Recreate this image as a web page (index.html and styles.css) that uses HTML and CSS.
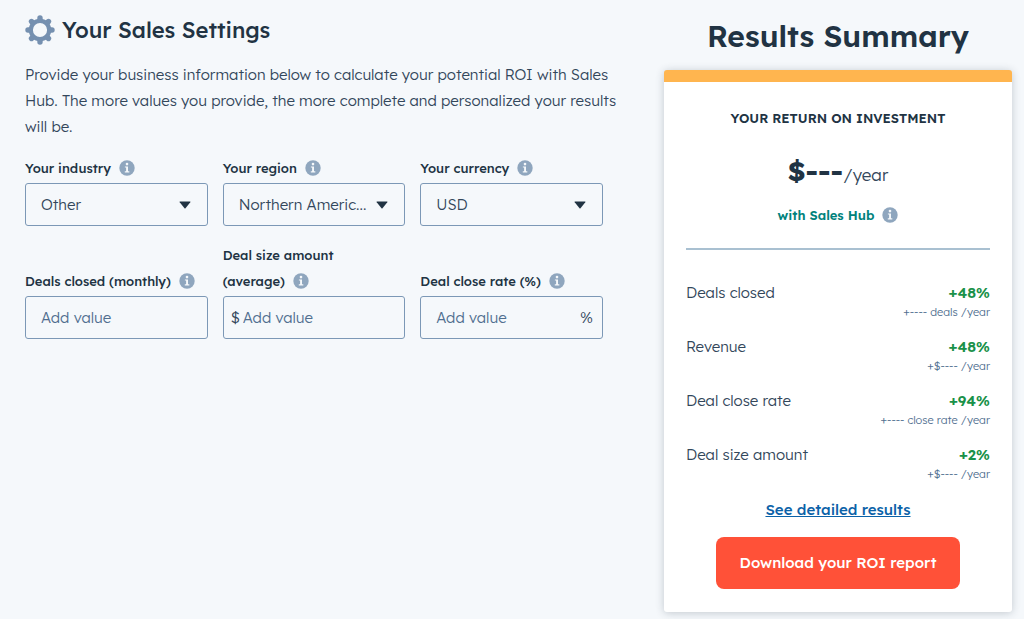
FILE: index.html
```html
<!DOCTYPE html>
<html lang="en">
<head>
<meta charset="utf-8">
<meta name="viewport" content="width=device-width, initial-scale=1">
<title>Sales Hub ROI Calculator</title>
<link rel="stylesheet" href="styles.css">
</head>
<body>
<svg class="sprite" aria-hidden="true">
  <symbol id="info" viewBox="0 0 16 16">
    <circle cx="8" cy="8" r="7.700" fill="#8fa6be"/>
    <circle cx="8" cy="4.1" r="1.3" fill="#f5f8fa"/>
    <path d="M5.9 6.400h3.100v4.900h1.300v1.100H5.800v-1.100h1.300V7.500H5.900z" fill="#f5f8fa"/>
  </symbol>
  <symbol id="caret" viewBox="0 0 12 8">
    <path d="M1 .5h10q.8 0 .3.7L6.5 7.3q-.5.6-1 0L.7 1.2Q.2.5 1 .5z" fill="#213343"/>
  </symbol>
</svg>
<main class="page">
  <section class="settings">
    <h1 class="settings-title">
      <svg class="gear" viewBox="0 0 30 30" aria-hidden="true">
        <g stroke="#7590b0" stroke-width="5.4" stroke-linecap="round">
          <path d="M15 3v2M15 25v2M3 15h2M25 15h2M6.500 6.500l1.300 1.300M22.200 22.200l1.300 1.300M23.500 6.500l-1.300 1.300M7.800 22.200l-1.300 1.300"/>
        </g>
        <circle cx="15" cy="15" r="9.200" fill="none" stroke="#7590b0" stroke-width="4.200"/>
      </svg>
      Your Sales Settings
    </h1>
    <p class="intro">Provide your business information below to calculate your potential ROI with Sales Hub. The more values you provide, the more complete and personalized your results will be.</p>
    <form class="fields">
      <div class="field">
        <div class="field-head"><label for="industry">Your industry</label><svg class="info"><use href="#info"/></svg></div>
        <div class="control"><select id="industry"><option>Other</option></select><svg class="caret"><use href="#caret"/></svg></div>
      </div>
      <div class="field">
        <div class="field-head"><label for="region">Your region</label><svg class="info"><use href="#info"/></svg></div>
        <div class="control"><select id="region"><option>Northern Americ...</option></select><svg class="caret"><use href="#caret"/></svg></div>
      </div>
      <div class="field">
        <div class="field-head"><label for="currency">Your currency</label><svg class="info"><use href="#info"/></svg></div>
        <div class="control"><select id="currency"><option>USD</option></select><svg class="caret"><use href="#caret"/></svg></div>
      </div>
      <div class="field">
        <div class="field-head"><label for="deals">Deals closed (monthly)</label><svg class="info"><use href="#info"/></svg></div>
        <div class="control"><input id="deals" type="text" placeholder="Add value"></div>
      </div>
      <div class="field">
        <div class="field-head"><label for="size">Deal size amount<br>(average)</label><svg class="info"><use href="#info"/></svg></div>
        <div class="control has-prefix"><span class="unit">$</span><input id="size" type="text" placeholder="Add value"></div>
      </div>
      <div class="field">
        <div class="field-head"><label for="rate">Deal close rate (%)</label><svg class="info"><use href="#info"/></svg></div>
        <div class="control has-suffix"><input id="rate" type="text" placeholder="Add value"><span class="unit">%</span></div>
      </div>
    </form>
  </section>
  <aside class="results">
    <h2 class="results-title">Results Summary</h2>
    <div class="card">
      <h3 class="card-title">YOUR RETURN ON INVESTMENT</h3>
      <p class="total"><strong class="amount">$---</strong>/year</p>
      <p class="product">with Sales Hub<svg class="info"><use href="#info"/></svg></p>
      <hr class="rule">
      <dl class="metrics">
        <div class="metric"><dt>Deals closed</dt><dd class="gain">+48%</dd><dd class="detail">+---- deals /year</dd></div>
        <div class="metric"><dt>Revenue</dt><dd class="gain">+48%</dd><dd class="detail">+$---- /year</dd></div>
        <div class="metric"><dt>Deal close rate</dt><dd class="gain">+94%</dd><dd class="detail">+---- close rate /year</dd></div>
        <div class="metric"><dt>Deal size amount</dt><dd class="gain">+2%</dd><dd class="detail">+$---- /year</dd></div>
      </dl>
      <a class="details-link" href="#details">See detailed results</a>
      <button class="download" type="button">Download your ROI report</button>
    </div>
  </aside>
</main>
</body>
</html>
```
FILE: styles.css
```css
* { box-sizing: border-box; }

body {
  margin: 0;
  background: #f5f8fb;
  color: #33475b;
  font-family: "Lexend Deca", Lexend, Inter, "Open Sans", sans-serif;
  font-size: 15px;
  font-weight: 300;
  line-height: 26px;
}

h1, h2, h3, p, dl, dd { margin: 0; }

.sprite { display: none; }

.page {
  display: grid;
  grid-template-columns: minmax(0, 600fr) minmax(0, 348fr);
  gap: 39px;
  padding: 14px 12px 8px 25px;
}

.settings-title {
  display: flex;
  align-items: center;
  gap: 7px;
  color: #213343;
  font-size: 22px;
  font-weight: 500;
  line-height: 32px;
}

.gear { width: 30px; height: 30px; }

.intro { margin-top: 16px; }

.fields {
  display: grid;
  grid-template-columns: repeat(3, minmax(0, 1fr));
  column-gap: 15px;
  row-gap: 16px;
  margin: 15px 22px 0 0;
}

.field {
  display: flex;
  flex-direction: column;
  justify-content: flex-end;
  gap: 2px;
}

.field-head {
  color: #213343;
  font-size: 13px;
  font-weight: 500;
}

.info {
  width: 16px;
  height: 16px;
  margin-left: 8px;
  vertical-align: -3px;
}

.control {
  position: relative;
  display: flex;
  align-items: center;
  height: 43px;
  border: 1px solid #7c98b6;
  border-radius: 3px;
}

.control select,
.control input {
  flex: 1;
  width: 100%;
  min-width: 0;
  height: 100%;
  padding: 0 15px;
  border: 0;
  background: transparent;
  color: #33475b;
  font: inherit;
  appearance: none;
}

.control input::placeholder { color: #516f90; opacity: 1; }

.has-prefix { padding-left: 7px; }

.has-prefix input { padding-left: 3px; }

.has-suffix { padding-right: 9px; }

.caret {
  position: absolute;
  right: 16px;
  width: 12px;
  height: 8px;
  pointer-events: none;
}

.results-title {
  padding-top: 2px;
  color: #213343;
  font-size: 30px;
  font-weight: 600;
  line-height: 40px;
  text-align: center;
}

.card {
  display: flex;
  flex-direction: column;
  align-items: center;
  margin-top: 14px;
  padding: 23px 22px;
  border-top: 12px solid #ffb54f;
  border-radius: 3px;
  background: #fff;
  box-shadow: 0 1px 8px rgba(33, 51, 67, 0.24);
}

.card-title {
  color: #213343;
  font-size: 13px;
  font-weight: 600;
}

.total {
  margin-top: 20px;
  font-size: 17px;
  line-height: 40px;
}

.amount {
  color: #213343;
  font-size: 28px;
  font-weight: 700;
}

.product {
  margin-top: 7px;
  color: #00827c;
  font-size: 13px;
  font-weight: 600;
}

.rule {
  width: 100%;
  height: 2px;
  margin: 20px 0 32px;
  border: 0;
  background: #a9c0d1;
}

.metrics {
  display: grid;
  gap: 16px;
  width: 100%;
}

.metric {
  display: grid;
  grid-template-columns: 1fr auto;
  line-height: 22px;
}

.gain {
  color: #1a9149;
  font-weight: 600;
  text-align: right;
}

.detail {
  grid-column: 1 / -1;
  color: #516f90;
  font-size: 11px;
  line-height: 16px;
  text-align: right;
}

.details-link {
  margin-top: 15px;
  color: #0b62a8;
  font-weight: 500;
}

.download {
  margin-top: 14px;
  padding: 12px 24px;
  border: 0;
  border-radius: 8px;
  background: #ff5138;
  color: #fff;
  font: inherit;
  font-weight: 500;
  line-height: 28px;
}
```
